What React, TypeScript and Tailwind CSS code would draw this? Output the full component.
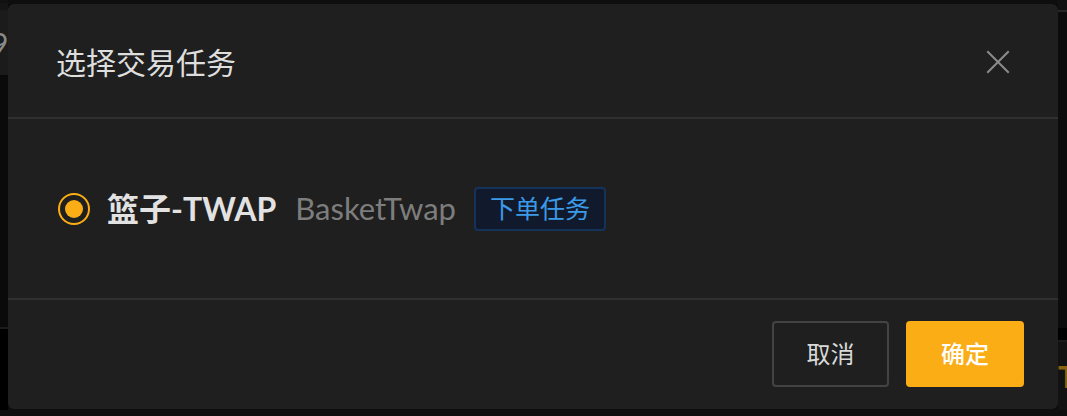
import React from "react";

function CloseIcon() {
  return (
    <svg width="24" height="24" viewBox="0 0 24 24" fill="none" stroke="#8c8c8c" strokeWidth="2" strokeLinecap="square">
      <path d="M2 2 L22 22 M22 2 L2 22" />
    </svg>
  );
}

export default function App() {
  return (
    <div className="relative h-[416px] w-[1067px] overflow-hidden bg-[#0b0b0b] font-[Lato,'Noto_Sans_CJK_SC',sans-serif]">
      {/* page behind the modal */}
      <div className="flex h-full">
        <div className="flex w-[8px] flex-col overflow-hidden">
          <div className="h-[3px] bg-[#111111]" />
          <div className="h-[7px] bg-[#151515]" />
          <div className="flex h-[65px] items-center bg-[#1b1b1b]">
            <span className="-ml-[9px] text-[30px] leading-none text-[#8a8a8a]">9</span>
          </div>
          <div className="h-[252px] bg-[#0a0a0a]" />
          <div className="h-[2px] bg-[#1c1c1c]" />
          <div className="h-[81px] bg-black" />
          <div className="flex-1 bg-[#0f0f0f]" />
        </div>
        <div className="flex flex-1 flex-col">
          <div className="h-[4px] bg-[#0e0e0e]" />
          <div className="flex-1 bg-[#0b0b0b]" />
          <div className="h-[7px] bg-[#0f0f0f]" />
        </div>
        <div className="flex w-[9px] flex-col overflow-hidden">
          <div className="h-[10px] bg-[#111111]" />
          <div className="h-[2px] bg-[#262626]" />
          <div className="h-[316px] bg-[#0c0c0c]" />
          <div className="h-[12px] bg-black" />
          <div className="h-[2px] bg-[#1a1a1a]" />
          <div className="flex h-[68px] items-center bg-[#121212]">
            <span className="text-[30px] font-bold leading-none text-[#8a6212]">T</span>
          </div>
          <div className="flex-1 bg-[#0e0e0e]" />
        </div>
      </div>

      {/* modal */}
      <div className="absolute left-[8px] top-[4px] flex h-[405px] w-[1050px] flex-col rounded-[6px] bg-[#1f1f1f]">
        <div className="flex h-[113px] items-center justify-between pl-[48px] pr-[48px] pt-[3px]">
          <span className="text-[30px] leading-none text-[#dedede]">选择交易任务</span>
          <button className="flex h-[24px] w-[24px] items-center justify-center">
            <CloseIcon />
          </button>
        </div>
        <div className="h-[2px] bg-[#303030]" />

        <div className="flex h-[179px] items-center pl-[50px]">
          <div className="flex h-[32px] w-[32px] items-center justify-center rounded-full border-2 border-[#faad14]">
            <div className="h-[18px] w-[18px] rounded-full bg-[#faad14]" />
          </div>
          <span className="ml-[17px] text-[32px] font-bold leading-none text-[#e2e2e2]">篮子-TWAP</span>
          <span className="ml-[19px] text-[31px] leading-none text-[#7d7d7d]">BasketTwap</span>
          <span className="ml-[18px] flex h-[44px] items-center rounded-[4px] border-2 border-[#15325b] bg-[#111a2c] px-[14px] text-[25px] leading-none text-[#3c9ae8]">
            下单任务
          </span>
        </div>
        <div className="h-[2px] bg-[#303030]" />

        <div className="flex flex-1 items-start justify-end gap-[17px] pr-[34px] pt-[21px]">
          <button className="flex h-[66px] w-[117px] items-center justify-center rounded-[4px] border-2 border-[#434343] text-[24px] text-[#d9d9d9]">
            取消
          </button>
          <button className="flex h-[66px] w-[118px] items-center justify-center rounded-[4px] bg-[#faad14] text-[24px] font-medium text-white">
            确定
          </button>
        </div>
      </div>
    </div>
  );
}
